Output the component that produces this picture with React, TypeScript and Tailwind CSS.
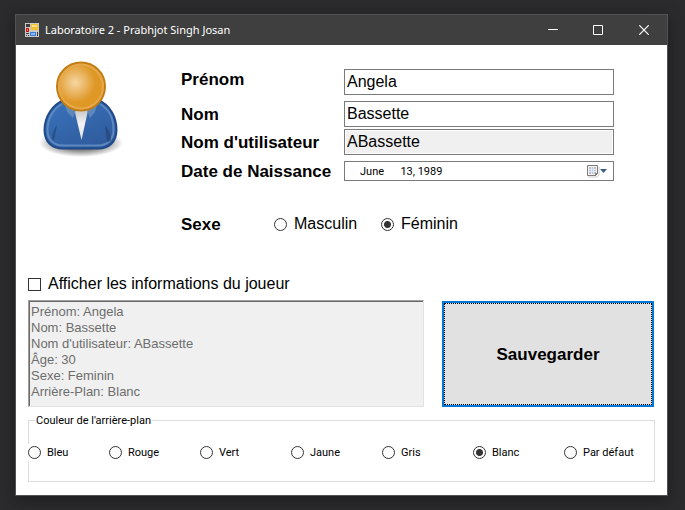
import { useState } from "react";

const colours = ["Bleu", "Rouge", "Vert", "Jaune", "Gris", "Blanc", "Par défaut"];

const radioClass =
  "m-0 size-[13px] shrink-0 appearance-none rounded-full border border-[#333] bg-white checked:bg-[radial-gradient(circle,#333_0_3px,white_4px)]";

const fieldClass =
  "h-[26px] w-full rounded-none border border-[#7a7a7a] px-[2px] text-base leading-5 text-black outline-none";

const boldClass = "pt-[2px] text-[17px] leading-5 font-bold";

function AppIcon() {
  return (
    <svg width="14" height="14" viewBox="0 0 14 14" aria-hidden="true">
      <path d="M0 0h14v14H0z" fill="#c9c9c9" />
      <path d="M1 1h4v3H1zM1 10h3v1H1zM1 12h1v1H1zM3 12h1v1H3zM12 9h1v4h-1z" fill="#3d3d3d" />
      <path d="M6 1h7v6H6z" fill="#f5c02c" />
      <path d="M7 2h5v2H7z" fill="#ffe588" />
      <path d="M1 5h3v4H1z" fill="#c4160f" />
      <path d="M2 6h1v2H2z" fill="#ff6f60" />
      <path d="M5 9h6v4H5z" fill="#3d78e0" />
      <path d="M6 10h4v2H6z" fill="#8db8ff" />
    </svg>
  );
}

function Avatar() {
  return (
    <svg width="90" height="106" viewBox="0 0 90 106" role="img" aria-label="Joueur">
      <defs>
        <radialGradient id="head" cx="0.38" cy="0.42" r="0.42">
          <stop offset="0" stopColor="#f6d6a4" />
          <stop offset="1" stopColor="#df9725" />
        </radialGradient>
        <radialGradient id="ground">
          <stop offset="0.5" stopColor="#000" stopOpacity="0.5" />
          <stop offset="1" stopColor="#000" stopOpacity="0" />
        </radialGradient>
        <linearGradient id="coat" x1="0" y1="0" x2="0.6" y2="1">
          <stop offset="0" stopColor="#3b74bd" />
          <stop offset="1" stopColor="#2f5c9e" />
        </linearGradient>
        <linearGradient id="shirt" x1="0" y1="0" x2="0" y2="1">
          <stop offset="0" stopColor="#c0c0c0" />
          <stop offset="0.5" stopColor="#f4f4f4" />
          <stop offset="1" stopColor="#e2e2e2" />
        </linearGradient>
      </defs>
      <ellipse cx="45" cy="87" rx="42" ry="14" fill="url(#ground)" />
      <path
        d="M28 44C16 49 8.500 61 8.500 74C8.500 86 16 92.500 27 92.500H62C73 92.500 80.500 86 80.500 74C80.500 61 74 49 62 44Z"
        fill="url(#coat)"
        stroke="#204a87"
        strokeWidth="2"
      />
      <path
        d="M26 48C17 53 11.500 63 11.500 74C11.500 84 18 89.500 27 89.500H62C71 89.500 77.500 84 77.500 74C77.500 63 73 53 64 48"
        fill="none"
        stroke="#5d88c0"
        strokeWidth="2"
      />
      <path d="M16 83C17 76 18 73 21 69L18 84ZM69 69C72 73 75 77 75 85L71 86Z" fill="#244676" opacity="0.7" />
      <path d="M38 52H52.500L45.500 84Z" fill="url(#shirt)" />
      <path d="M29 49L31 56L37 62L40 54ZM61 49L59 56L54 62L51 54Z" fill="#5c88bb" />
      <circle cx="45" cy="30.500" r="24" fill="url(#head)" stroke="#c17d11" strokeWidth="2" />
      <circle cx="45" cy="30.500" r="22" fill="none" stroke="#e6a84c" strokeWidth="2" />
    </svg>
  );
}

export default function App() {
  const [sex, setSex] = useState("Féminin");
  const [colour, setColour] = useState("Blanc");
  const [first, setFirst] = useState("Angela");
  const [last, setLast] = useState("Bassette");

  return (
    <div className="flex min-h-screen flex-col bg-[#2b2b2d] pt-[14px] pr-[17px] pb-[14px] pl-[15px] font-['Liberation_Sans',Arial,sans-serif] text-black">
      <div className="flex flex-1 flex-col border border-[#515253] bg-white shadow-[0_4px_14px_rgba(0,0,0,0.35)]">
        <header className="flex h-[30px] items-center bg-[#3f3f3f] pl-[9px] text-white">
          <AppIcon />
          <h1 className="ml-[6px] flex-1 font-['Noto_Sans','Open_Sans',sans-serif] text-[11px] leading-4">
            Laboratoire 2 - Prabhjot Singh Josan
          </h1>
          <button type="button" aria-label="Réduire" className="flex h-full w-[45px] items-center justify-center">
            <svg width="10" height="10" viewBox="0 0 10 10"><path d="M0 4h10v1H0z" fill="white" /></svg>
          </button>
          <button type="button" aria-label="Agrandir" className="flex h-full w-[45px] items-center justify-center">
            <svg width="10" height="10" viewBox="0 0 10 10"><path d="M.5.5h9v9h-9z" fill="none" stroke="white" /></svg>
          </button>
          <button type="button" aria-label="Fermer" className="flex h-full w-[47px] items-center justify-center">
            <svg width="10" height="10" viewBox="0 0 10 10"><path d="M.3.3l9.400 9.400M9.700.3L.3 9.700" fill="none" stroke="white" strokeWidth="1.200" /></svg>
          </button>
        </header>

        <main className="flex flex-1 flex-col pr-3 pb-[13px] pl-3">
          <div className="flex">
            <div className="w-[153px] shrink-0 pt-[11px] pl-2">
              <Avatar />
            </div>
            <div className="flex-1 pt-6 pr-[41px]">
              <div className="grid grid-cols-[163px_1fr] gap-y-[6px]">
                <label htmlFor="first" className={`${boldClass} -mt-px`}>Prénom</label>
                <input id="first" className={`${fieldClass} bg-white`} value={first} onChange={(e) => setFirst(e.target.value)} />
                <div className="col-span-2 grid grid-cols-subgrid items-center gap-y-[2px]">
                  <label htmlFor="last" className={boldClass}>Nom</label>
                  <input id="last" className={`${fieldClass} bg-white`} value={last} onChange={(e) => setLast(e.target.value)} />
                  <label htmlFor="user" className={boldClass}>Nom d'utilisateur</label>
                  <input id="user" readOnly className={`${fieldClass} bg-[#f0f0f0] shadow-[inset_0_0_0_1px_white]`} value={first.charAt(0) + last} />
                </div>
                <label htmlFor="birth" className="h-5 text-[17px] leading-[22px] font-bold">Date de Naissance</label>
                <div className="flex h-5 items-center border border-[#7a7a7a] pr-[5px]">
                  <input
                    id="birth"
                    className="min-w-0 flex-1 pt-[2px] pl-[15px] font-[Roboto,sans-serif] text-[11px] leading-4 outline-none"
                    defaultValue={"June\u00a0\u00a0\u00a0\u00a0\u00a0\u00a013, 1989"}
                  />
                  <button type="button" aria-label="Ouvrir le calendrier">
                    <svg width="22" height="14" viewBox="0 0 22 14">
                      <path d="M2 13h9l2-2V3" fill="none" stroke="#d0d0d0" />
                      <path d="M1.500 1.500h10v8l-2 2h-8z" fill="#f4f4f6" stroke="#837873" />
                      <path d="M3 3h7v7H3z" fill="#b9c3d3" />
                      <path d="M3 5.500h7M3 7.500h7M5.500 3v7M7.500 3v7" stroke="#f1f4f8" strokeWidth="0.700" />
                      <path d="M9 12v-3h3z" fill="#837873" />
                      <path d="M14 5h7l-3.500 4z" fill="#3f5b89" />
                    </svg>
                  </button>
                </div>
              </div>
              <div role="radiogroup" aria-labelledby="sex" className="mt-[33px] flex h-5 items-center">
                <span id="sex" className={`${boldClass} w-[93px]`}>Sexe</span>
                {["Masculin", "Féminin"].map((s) => (
                  <label key={s} className="flex w-[107px] items-center gap-[7px] text-base leading-5">
                    <input type="radio" name="sex" className={radioClass} checked={sex === s} onChange={() => setSex(s)} />
                    {s}
                  </label>
                ))}
              </div>
            </div>
          </div>

          <label className="mt-10 flex h-5 items-center gap-[7px] self-start text-base leading-5">
            <input type="checkbox" className="m-0 size-[13px] appearance-none border border-[#333] bg-white checked:bg-[#333]" />
            Afficher les informations du joueur
          </label>

          <div className="mt-[6px] flex gap-[18px] pr-px">
            <textarea
              readOnly
              aria-label="Informations du joueur"
              className="h-[107px] min-w-0 flex-1 resize-none rounded-none border border-t-[#a0a0a0] border-r-[#e3e3e3] border-b-[#e3e3e3] border-l-[#a0a0a0] bg-[#f0f0f0] px-[2px] py-[3px] text-[13px] leading-4 text-[#6d6d6d] shadow-[inset_1px_1px_0_#696969] outline-none"
              value={
                "Prénom: Angela\nNom: Bassette\nNom d'utilisateur: ABassette\nÂge: 30\nSexe: Feminin\nArrière-Plan: Blanc"
              }
            />
            <button type="button" className="mt-px w-[212px] border-2 border-[#0078d7] bg-[#e1e1e1]">
              <span className={`${boldClass} flex h-full items-center justify-center border border-dotted border-black`}>Sauvegarder</span>
            </button>
          </div>

          <fieldset className="mt-2 h-[67px] border border-[#dcdcdc] font-[Roboto,sans-serif] text-[11px]">
            <legend className="ml-[6px] px-px leading-[11px]">Couleur de l'arrière-plan</legend>
            <div className="-mx-px grid grid-cols-[81fr_repeat(6,91fr)] pt-[18px] leading-4">
              {colours.map((c) => (
                <label key={c} className="flex h-[17px] items-center gap-[6px] justify-self-start bg-white">
                  <input type="radio" name="colour" className={radioClass} checked={colour === c} onChange={() => setColour(c)} />
                  {c}
                </label>
              ))}
            </div>
          </fieldset>
        </main>
      </div>
    </div>
  );
}
